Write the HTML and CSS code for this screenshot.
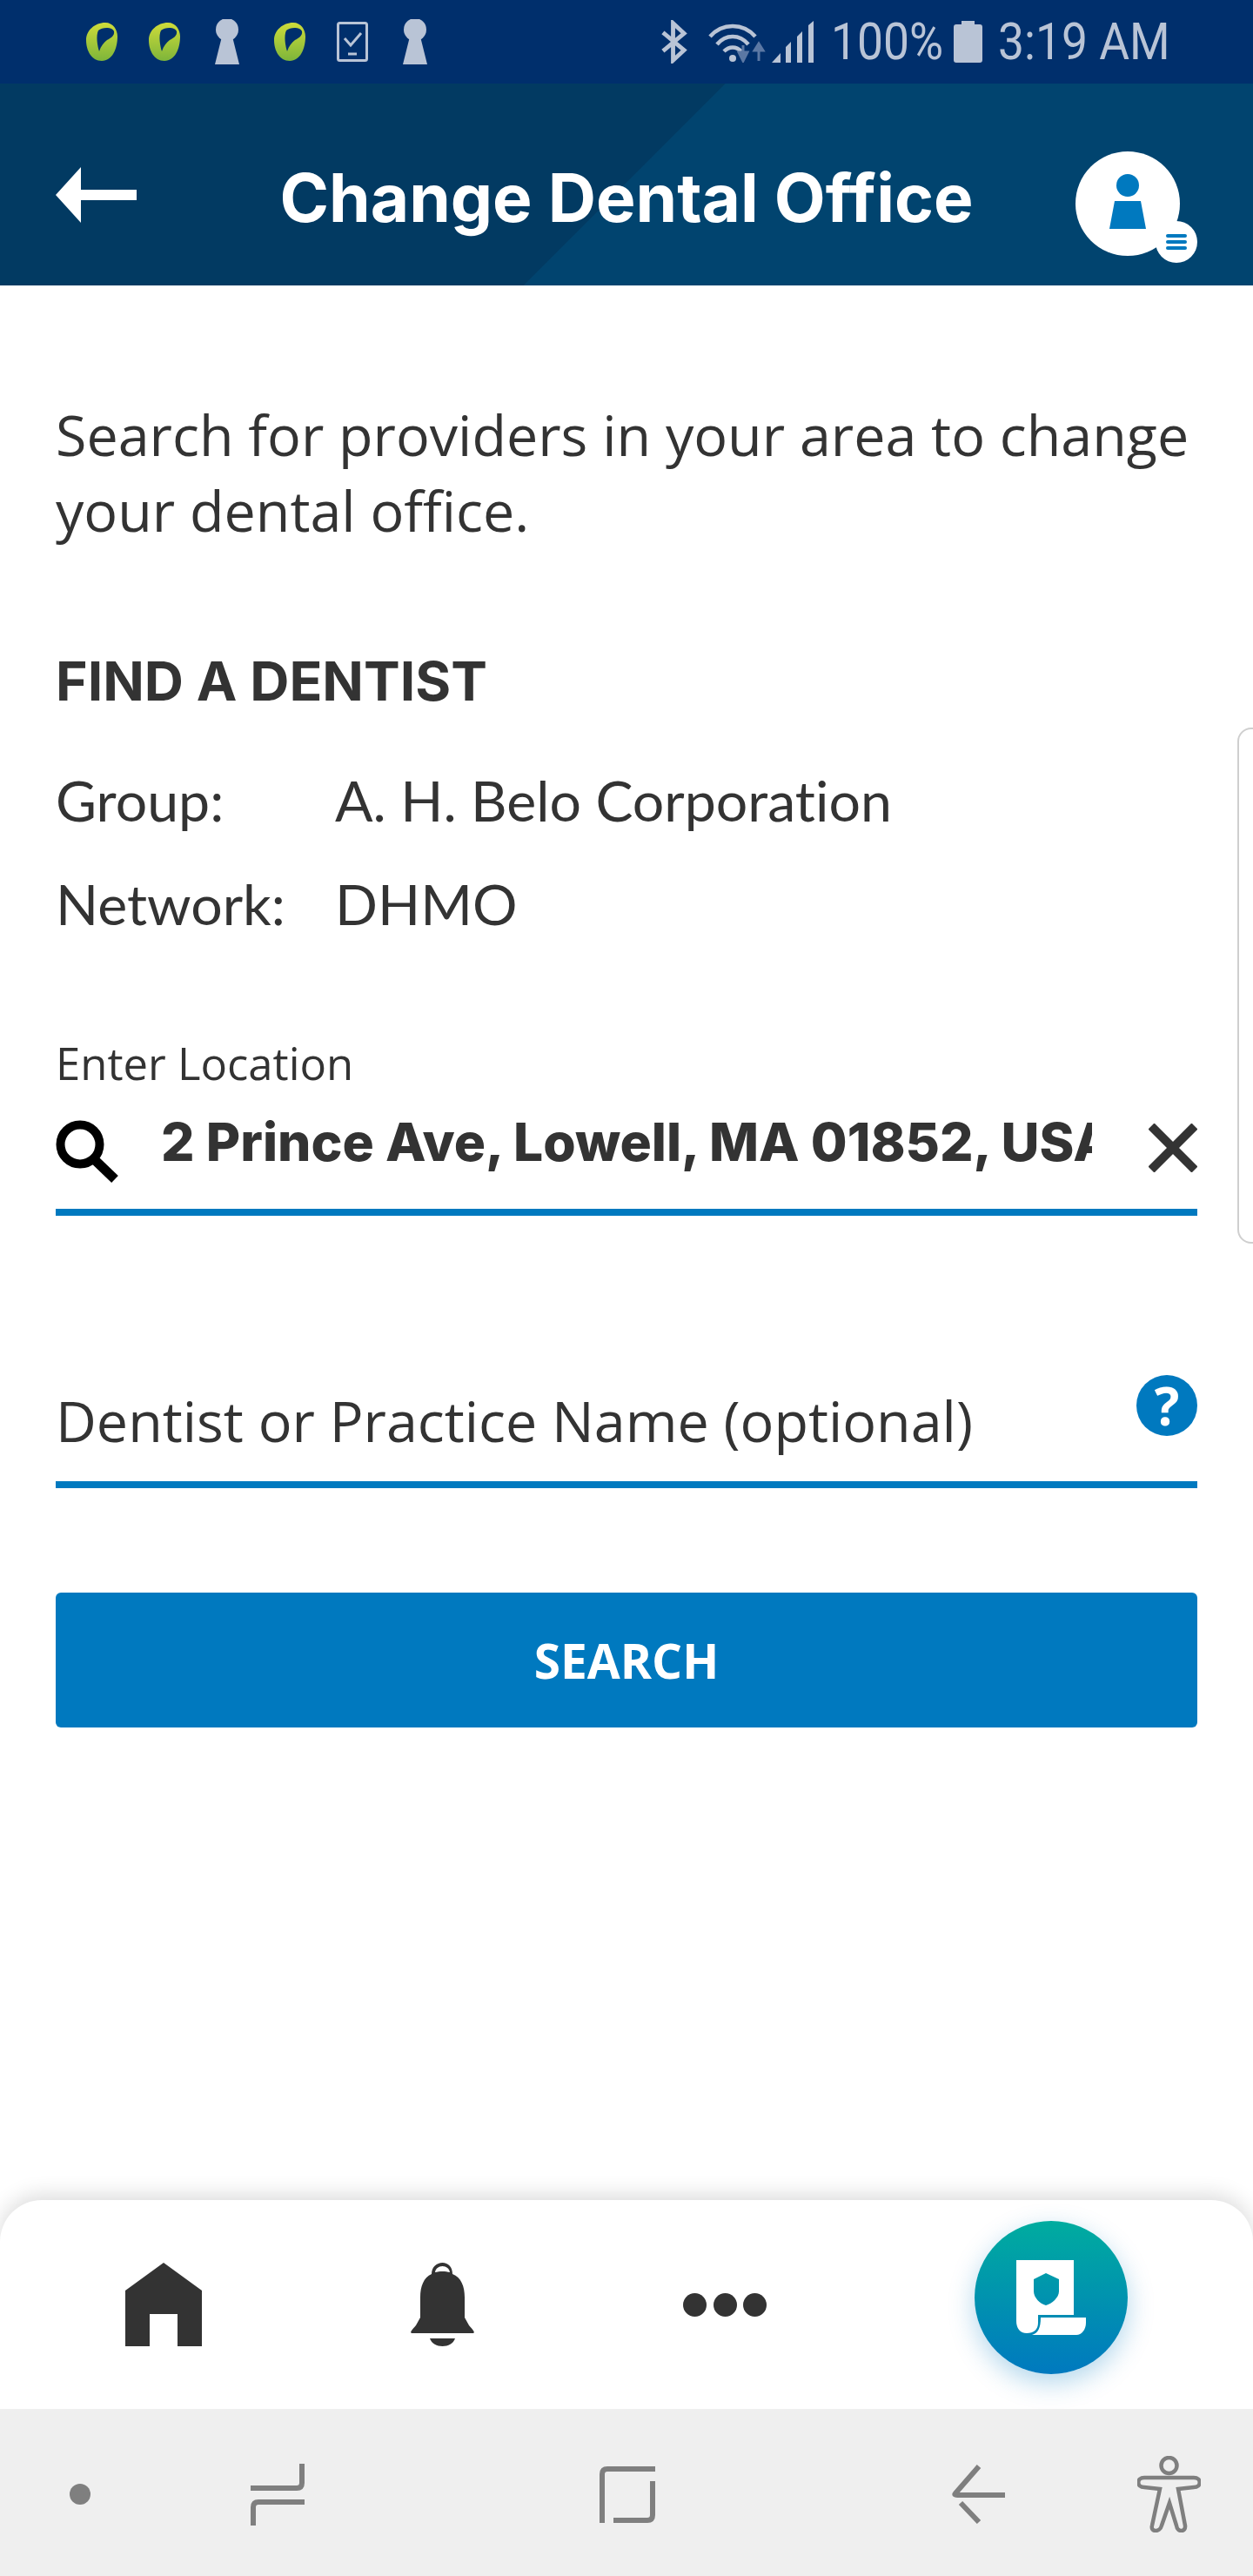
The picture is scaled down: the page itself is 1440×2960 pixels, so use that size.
FILE: index.html
```html
<!DOCTYPE html>
<html lang="en">
<head>
    <meta charset="UTF-8">
    <meta name="viewport" content="width=device-width, initial-scale=1.0">
    <title>Change Dental Office</title>
    <link rel="stylesheet" href="styles.css">
</head>
<body>
    <div class="phone">
        <div class="status-bar">
            <div class="status-left">
                <svg class="leaf" viewBox="0 0 36 44"><defs><linearGradient id="lf" x1="0" y1="0" x2="0" y2="1"><stop offset="0" stop-color="#cfdc3a"/><stop offset="1" stop-color="#7db53a"/></linearGradient></defs><path fill="url(#lf)" fill-rule="evenodd" d="M22 0C31 0 36 8 36 16C36 30 30 44 18 44C6 44 0 32 0 20C0 9 10 0 22 0ZM14 9C19 5 30 5 32 10C33 15 28 18 24 20C20 23 17 27 15 33C13 27 11 15 14 9Z"/></svg>
                <svg class="leaf" viewBox="0 0 36 44"><path fill="url(#lf)" fill-rule="evenodd" d="M22 0C31 0 36 8 36 16C36 30 30 44 18 44C6 44 0 32 0 20C0 9 10 0 22 0ZM14 9C19 5 30 5 32 10C33 15 28 18 24 20C20 23 17 27 15 33C13 27 11 15 14 9Z"/></svg>
                <svg class="keyhole" viewBox="0 0 28 52"><circle cx="14" cy="12" r="13"/><path d="M8 20H20L28 52H0Z"/></svg>
                <svg class="leaf" viewBox="0 0 36 44"><path fill="url(#lf)" fill-rule="evenodd" d="M22 0C31 0 36 8 36 16C36 30 30 44 18 44C6 44 0 32 0 20C0 9 10 0 22 0ZM14 9C19 5 30 5 32 10C33 15 28 18 24 20C20 23 17 27 15 33C13 27 11 15 14 9Z"/></svg>
                <svg class="task-phone" viewBox="0 0 36 46" fill="none" stroke="#b9c4d6"><rect x="1.500" y="1.500" width="33" height="43" rx="2" stroke-width="3"/><path d="M9 19L16 27L28 13" stroke-width="3"/><path d="M13 37H23" stroke-width="3"/></svg>
                <svg class="keyhole" viewBox="0 0 28 52"><circle cx="14" cy="12" r="13"/><path d="M8 20H20L28 52H0Z"/></svg>
            </div>
            <div class="status-right">
                <svg class="bt" viewBox="0 0 32 50" fill="none" stroke="#b9c4d6" stroke-width="5"><path d="M3 14L28 35L15 47V3L28 15L3 36"/></svg>
                <svg class="wifi" viewBox="0 0 66 48" fill="none"><path d="M2 18C16 2 40 2 54 18M10 27C20 15 36 15 46 27M18 35C24 29 32 29 38 35" stroke="#b9c4d6" stroke-width="4.500"/><circle cx="28" cy="43" r="4" fill="#b9c4d6"/><path d="M40 28V40M35 36L40 46L45 36Z" stroke="#5b78a4" stroke-width="3" fill="#5b78a4"/><path d="M58 46V32M53 34L58 26L63 34Z" stroke="#5b78a4" stroke-width="3" fill="#5b78a4"/></svg>
                <svg class="signal" viewBox="0 0 48 48" fill="#b9c4d6"><path d="M0 48L10 37V48ZM16 30L22 24V48H16ZM29 18L35 12V48H29ZM42 5L48 0V48H42Z"/></svg>
                <span class="status-text battery-text">100%</span>
                <svg class="battery" viewBox="0 0 33 48" fill="#b9c4d6"><path d="M9 0H24V4H30Q33 4 33 7V45Q33 48 30 48H3Q0 48 0 45V7Q0 4 3 4H9Z"/></svg>
                <span class="status-text time-text">3:19 AM</span>
            </div>
        </div>

        <header class="app-header">
            <svg class="back-arrow" viewBox="0 0 93 64" fill="#fff"><path d="M29 0V26H93V38H29V64L0 32Z"/></svg>
            <h1>Change Dental Office</h1>
            <div class="avatar">
                <svg viewBox="0 0 42 63" class="avatar-person" fill="#0079bf"><circle cx="21" cy="13" r="13"/><path d="M6 31H36L42 63H0Z"/></svg>
                <span class="avatar-badge">
                    <span></span><span></span><span></span>
                </span>
            </div>
        </header>

        <main class="content">
            <p class="intro">Search for providers in your area to change your dental office.</p>
            <h2>FIND A DENTIST</h2>
            <div class="info-row"><span class="info-label">Group:</span><span>A. H. Belo Corporation</span></div>
            <div class="info-row"><span class="info-label">Network:</span><span>DHMO</span></div>

            <div class="field location-field">
                <label>Enter Location</label>
                <div class="field-row">
                    <svg class="search-icon" viewBox="0 0 73 72" fill="none" stroke="#000"><circle cx="28" cy="28" r="22.500" stroke-width="10"/><path d="M43 44L68 68" stroke-width="11"/></svg>
                    <div class="location-value">2 Prince Ave, Lowell, MA 01852, USA</div>
                    <svg class="clear-icon" viewBox="0 0 56 56" stroke="#333" stroke-width="10"><path d="M3 3L53 53M53 3L3 53"/></svg>
                </div>
            </div>

            <div class="field name-field">
                <span class="name-placeholder">Dentist or Practice Name (optional)</span>
                <span class="help-icon">?</span>
            </div>

            <button class="search-btn">SEARCH</button>
        </main>

        <div class="scroll-handle"></div>

        <nav class="bottom-nav">
            <svg class="nav-home" viewBox="0 0 88 96" fill="#333"><path d="M44 0L88 32V96H60V59H28V96H0V32Z"/></svg>
            <svg class="nav-bell" viewBox="0 0 75 96" fill="#333"><path fill-rule="evenodd" d="M37.500 0C44 0 49 5 49 13C59 17 63 27 63 40V63L68 72C76 81 75 81 70 81H5C0 81 -1 81 7 72L12 63V40C12 27 16 17 25 13C25 5 31 0 37.500 0ZM37.500 4C33 4 29.500 7 29 11C34 9.500 41 9.500 46 11C45.500 7 42 4 37.500 4Z"/><path d="M23 87H52C50 93 44 96 37.500 96C31 96 25 93 23 87Z"/></svg>
            <div class="nav-dots"><span></span><span></span><span></span></div>
            <div class="fab">
                <svg viewBox="0 0 80 86" fill="#fff"><path fill-rule="evenodd" d="M0 0H66V63H25V72C25 80 20 84 12 84C4 84 0 78 0 70ZM34 15L20 22V36C20 43 27 50 34 52C41 50 49 43 49 36V22Z"/><path d="M28 66H80V72C80 80 75 86 69 86H18C25 84 28 78 28 66Z"/></svg>
            </div>
        </nav>

        <div class="system-nav">
            <span class="sys-dot"></span>
            <svg class="sys-recents" viewBox="0 0 62 71" fill="none" stroke="#7f7f7f" stroke-width="6"><path d="M59 0V22Q59 28 53 28H0M62 44H9Q3 44 3 50V71"/></svg>
            <svg class="sys-home" viewBox="0 0 64 65" fill="none" stroke="#7f7f7f" stroke-width="6"><path d="M3 65V9Q3 3 9 3H64M16 62H55Q61 62 61 56V17"/></svg>
            <svg class="sys-back" viewBox="0 0 61 68" fill="none" stroke="#7f7f7f" stroke-width="6"><path d="M31 2L4 33Q2 35 6 35H61M10 44L31 66"/></svg>
            <svg class="sys-access" viewBox="0 0 73 88" fill="none" stroke="#7f7f7f" stroke-width="4.500"><circle cx="36.500" cy="11" r="9"/><path d="M8 25H65C74 25 74 36 65 36L47 38L55 80C56 88 46 88 45 80L37 54L28 80C26 88 15 88 17 80L26 38L8 36C-1 36 -1 25 8 25Z"/></svg>
        </div>
    </div>
</body>
</html>
```

FILE: styles.css
```css
* {
    box-sizing: border-box;
}
body {
    margin: 0;
    background: #fff;
    font-family: 'Open Sans', sans-serif;
    color: #333;
}
.phone {
    position: relative;
    width: 1440px;
    height: 2960px;
    display: flex;
    flex-direction: column;
    overflow: hidden;
}

/* status bar */
.status-bar {
    height: 96px;
    flex: none;
    background: #002f6c;
    display: flex;
    align-items: center;
    padding: 0 100px 0 99px;
    justify-content: space-between;
}
.status-left {
    display: flex;
    align-items: center;
    gap: 36px;
}
.status-right {
    display: flex;
    align-items: center;
}
.leaf {
    width: 36px;
    height: 44px;
}
.keyhole {
    width: 28px;
    height: 52px;
    fill: #b9c4d6;
    margin: 0 4px;
}
.task-phone {
    width: 36px;
    height: 46px;
}
.bt {
    width: 31px;
    height: 50px;
    margin-right: 24px;
}
.wifi {
    width: 66px;
    height: 48px;
    margin-right: 7px;
}
.signal {
    width: 48px;
    height: 48px;
    margin-right: 20px;
}
.status-text {
    display: inline-block;
    font-family: Roboto, sans-serif;
    font-size: 60px;
    line-height: 60px;
    color: #b9c4d6;
    white-space: nowrap;
    transform: scaleX(0.89);
    transform-origin: left;
}
.battery-text {
    width: 125px;
    margin-right: 16px;
}
.time-text {
    width: 193px;
}
.battery {
    width: 33px;
    height: 48px;
    margin-right: 18px;
}

/* header */
.app-header {
    height: 232px;
    flex: none;
    display: flex;
    align-items: center;
    justify-content: space-between;
    padding: 0 64px;
    background: linear-gradient(135deg, #023a62 0, #023a62 589px, #01446f 590px);
    position: relative;
}
.app-header h1 {
    position: absolute;
    left: 0;
    right: 0;
    top: 29px;
    bottom: 0;
    margin: 0;
    display: flex;
    align-items: center;
    justify-content: center;
    font-family: Inter, sans-serif;
    font-weight: 700;
    font-size: 76.5px;
    color: #fff;
}
.back-arrow {
    width: 93px;
    height: 64px;
    margin-top: 24px;
}
.avatar {
    position: relative;
    width: 120px;
    height: 120px;
    margin: 44px 20px 0 0;
    border-radius: 50%;
    background: #fff;
    display: flex;
    align-items: center;
    justify-content: center;
}
.avatar-person {
    width: 42px;
    height: 63px;
    margin-bottom: 6px;
}
.avatar-badge {
    position: absolute;
    right: -20px;
    bottom: -8px;
    width: 48px;
    height: 48px;
    border-radius: 50%;
    background: #fff;
    display: flex;
    flex-direction: column;
    align-items: center;
    justify-content: center;
    gap: 3px;
}
.avatar-badge span {
    width: 24px;
    height: 4px;
    background: #0079bf;
    border-radius: 2px;
}

/* content */
.content {
    flex: 1;
    padding: 0 64px;
}
.intro {
    margin: 128px 0 0;
    font-size: 64.6px;
    line-height: 87px;
}
h2 {
    margin: 0;
    padding-top: 75px;
    font-family: Inter, sans-serif;
    font-weight: 700;
    font-size: 62.5px;
    line-height: 155px;
}
.info-row {
    display: flex;
    font-family: Lato, sans-serif;
    font-size: 64.4px;
    line-height: 119px;
    font-variant-ligatures: none;
}
.info-label {
    width: 321px;
}
.field {
    border-bottom: 8px solid #0079bf;
}
.location-field {
    margin-top: 80px;
}
label {
    display: block;
    font-size: 50.8px;
    line-height: 87px;
}
.field-row {
    display: flex;
    align-items: center;
    padding-bottom: 30px;
    height: 124px;
}
.search-icon {
    width: 73px;
    height: 72px;
    flex: none;
    margin: 22px 48px 0 0;
}
.location-value {
    width: 1070px;
    flex: none;
    overflow: hidden;
    white-space: nowrap;
    font-family: Inter, sans-serif;
    font-weight: 800;
    font-size: 60.5px;
}
.clear-icon {
    width: 56px;
    height: 56px;
    margin: 14px 0 0 auto;
}
.name-field {
    margin-top: 183px;
    height: 130px;
    display: flex;
    justify-content: space-between;
    position: relative;
}
.name-placeholder {
    font-size: 64.6px;
    line-height: 88px;
    margin-top: 8px;
}
.help-icon {
    width: 70px;
    height: 70px;
    border-radius: 50%;
    background: #0079bf;
    color: #fff;
    font-weight: 700;
    font-size: 60px;
    line-height: 70px;
    text-align: center;
}
.search-btn {
    display: block;
    width: 100%;
    height: 155px;
    margin-top: 120px;
    border: none;
    border-radius: 6px;
    background: #0079bf;
    color: #fff;
    font-family: 'Open Sans', sans-serif;
    font-weight: 700;
    font-size: 55px;
}
.scroll-handle {
    position: absolute;
    right: -4px;
    top: 836px;
    width: 22px;
    height: 593px;
    border: 2px solid #cfcfcf;
    border-radius: 16px 0 0 16px;
}

/* bottom nav */
.bottom-nav {
    height: 240px;
    flex: none;
    background: #fff;
    border-radius: 48px 48px 0 0;
    box-shadow: 0 -6px 24px rgba(0, 0, 0, 0.14);
    display: flex;
    align-items: center;
    gap: 239px;
    padding-left: 144px;
    position: relative;
}
.nav-home {
    width: 88px;
    height: 96px;
}
.nav-bell {
    width: 75px;
    height: 96px;
}
.nav-dots {
    width: 96px;
    display: flex;
    justify-content: space-between;
}
.nav-dots span {
    width: 27px;
    height: 27px;
    border-radius: 50%;
    background: #333;
}
.fab {
    width: 176px;
    height: 176px;
    margin-bottom: 16px;
    border-radius: 50%;
    background: linear-gradient(#00ac9f, #0079bf);
    box-shadow: 0 10px 30px rgba(0, 121, 191, 0.3);
    display: flex;
    align-items: center;
    justify-content: center;
}
.fab svg {
    width: 80px;
    height: 86px;
}

/* android nav */
.system-nav {
    height: 192px;
    flex: none;
    background: #efefef;
    display: flex;
    align-items: center;
    padding: 4px 0 0 80px;
    position: relative;
}
.sys-dot {
    width: 24px;
    height: 24px;
    border-radius: 50%;
    background: #7f7f7f;
}
.sys-recents {
    width: 62px;
    height: 71px;
    margin-left: 184px;
}
.sys-home {
    width: 64px;
    height: 65px;
    margin-left: 339px;
}
.sys-back {
    width: 61px;
    height: 68px;
    margin-left: 341px;
}
.sys-access {
    width: 73px;
    height: 88px;
    margin-left: 152px;
}
```
